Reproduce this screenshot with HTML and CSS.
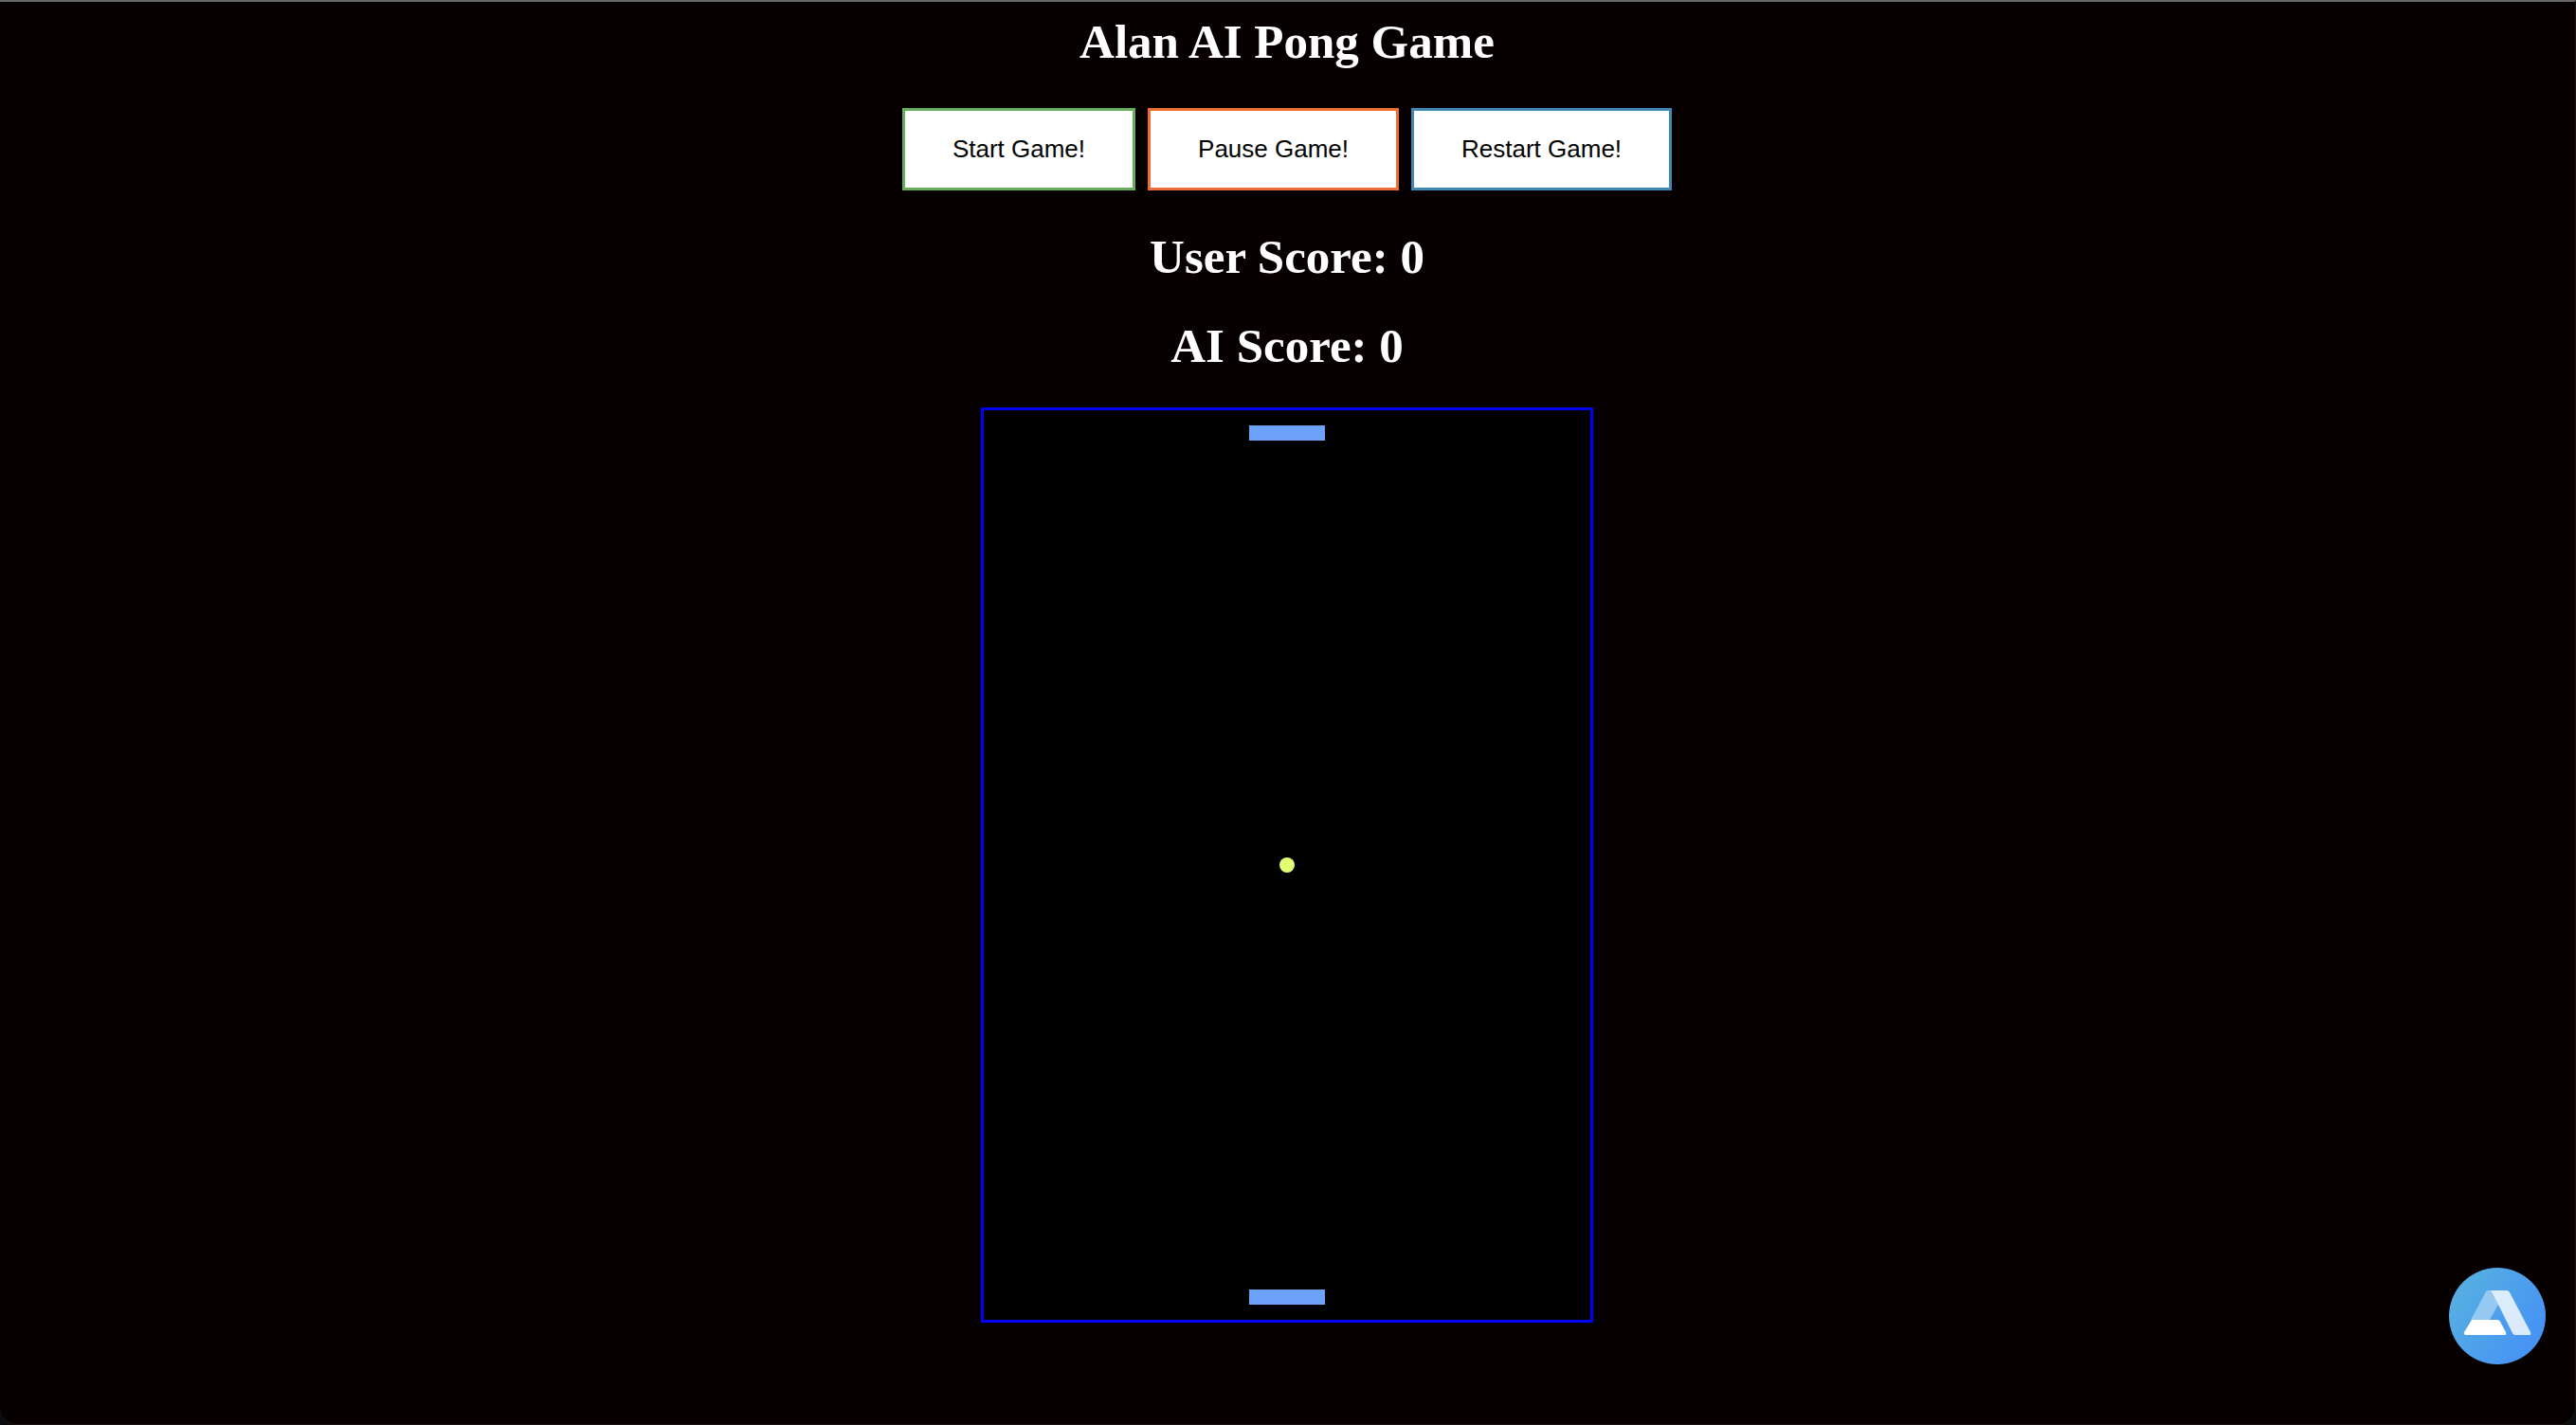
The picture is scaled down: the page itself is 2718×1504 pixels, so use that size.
FILE: index.html
```html
<!DOCTYPE html>
<html lang="en">
<head>
  <meta charset="utf-8">
  <title>Alan AI Pong Game</title>
  <link rel="stylesheet" href="styles.css">
</head>
<body>
  <main class="game">
    <h1 class="heading">Alan AI Pong Game</h1>
    <div class="controls">
      <button type="button" class="button button-start">Start Game!</button>
      <button type="button" class="button button-pause">Pause Game!</button>
      <button type="button" class="button button-restart">Restart Game!</button>
    </div>
    <h1 class="heading">User Score: 0</h1>
    <h1 class="heading">AI Score: 0</h1>
    <div class="court">
      <div class="paddle"></div>
      <div class="ball"></div>
      <div class="paddle"></div>
    </div>
  </main>
  <button type="button" class="assistant" aria-label="Alan voice assistant">
    <svg class="assistant-logo" viewBox="0 0 102 102" aria-hidden="true">
      <path fill="#fff" fill-opacity=".4" d="M41 24h3q2 0 3 3l5 12-9 16H23l15-28q1-3 3-3z"/>
      <path fill="#fff" fill-opacity=".8" d="M43 24h18q2 0 3 2l22 42q1 3-1 3H70q-2 0-3-2L46 27q-1-3-3-3z"/>
      <path fill="#fff" d="M24 55h27q2 0 3 2l6 11q1 3-1 3H18q-3 0-2-3z"/>
    </svg>
  </button>
</body>
</html>
```
FILE: styles.css
```css
html {
  background: #0b0d10;
}

body {
  box-sizing: border-box;
  min-height: 100vh;
  margin: 0;
  border: 1px solid #1a1717;
  border-width: 2px 1px 1px 0;
  border-top-color: #666;
  border-radius: 0 0 18px 18px;
  background: #060000;
  color: #fff;
  font-family: "Liberation Serif", "Times New Roman", serif;
}

.game {
  display: flex;
  flex-direction: column;
  align-items: center;
  gap: 35px;
  padding: 13px 14px 13px 13px;
}

.heading {
  margin: 0;
  font-size: 51px;
  line-height: 59px;
}

.controls {
  display: flex;
  flex-wrap: wrap;
  justify-content: center;
  gap: 13px;
  margin-top: 5px;
  margin-bottom: 6px;
}

.button {
  padding: 26px 50px;
  border: 3px solid;
  border-radius: 0;
  background: #fff;
  color: #000;
  font-family: "Liberation Sans", Arial, sans-serif;
  font-size: 26px;
  line-height: 29px;
  cursor: pointer;
}

.button-start {
  border-color: #67ad5b;
}

.button-pause {
  border-color: #ee6c36;
}

.button-restart {
  border-color: #4089b7;
}

.court {
  display: flex;
  flex-direction: column;
  align-items: center;
  justify-content: space-between;
  box-sizing: border-box;
  width: 646px;
  max-width: 100%;
  aspect-ratio: 646 / 966;
  padding: 16px;
  border: 3px solid #0000f5;
  background: #000;
}

.paddle {
  width: 80px;
  height: 16px;
  background: #6ca3f8;
}

.ball {
  width: 16px;
  height: 16px;
  border-radius: 50%;
  background: #e3ff73;
}

.assistant {
  position: fixed;
  right: 32px;
  bottom: 64px;
  width: 102px;
  height: 102px;
  padding: 0;
  border: 0;
  border-radius: 50%;
  background: linear-gradient(122deg, #57b1e0 8%, #4692f5 86%);
  cursor: pointer;
}

.assistant-logo {
  display: block;
  width: 100%;
  height: 100%;
}
```
